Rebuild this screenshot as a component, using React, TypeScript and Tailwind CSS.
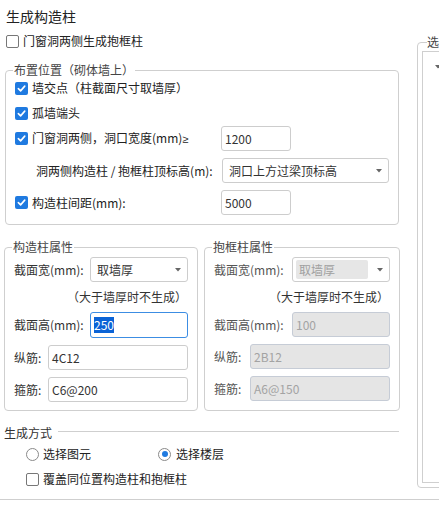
import React from "react";

const FONT = { fontFamily: '"Microsoft YaHei", "Noto Sans CJK SC", "Noto Sans", sans-serif' };

function Checkbox({ checked = false }: { checked?: boolean }) {
  if (checked) {
    return (
      <span className="w-[13px] h-[13px] shrink-0 rounded-[2px] bg-[#1f7ae0] flex items-center justify-center">
        <svg width="9" height="9" viewBox="0 0 10 10">
          <polyline
            points="1.5,5.2 4,7.6 8.6,2.4"
            fill="none"
            stroke="white"
            strokeWidth="1.8"
            strokeLinecap="round"
            strokeLinejoin="round"
          />
        </svg>
      </span>
    );
  }
  return (
    <span className="w-[13px] h-[13px] shrink-0 rounded-[2px] border border-[#777] bg-white" />
  );
}

function Radio({ checked = false }: { checked?: boolean }) {
  return (
    <span className="w-[13px] h-[13px] shrink-0 rounded-full border border-[#8a8a8a] bg-white flex items-center justify-center">
      {checked && <span className="w-[6px] h-[6px] rounded-full bg-[#1f7ae0]" />}
    </span>
  );
}

function Arrow() {
  return (
    <svg width="6" height="4" viewBox="0 0 6 4" className="shrink-0">
      <polygon points="0,0 6,0 3,3.5" fill="#666" />
    </svg>
  );
}

function Select({
  value,
  disabled,
  className,
}: {
  value: string;
  disabled?: boolean;
  className: string;
}) {
  return (
    <div
      className={`${className} h-[25px] shrink-0 rounded-[3px] border border-[#cdcdcd] bg-white flex items-center pr-[6px]`}
    >
      {disabled ? (
        <div className="ml-[3px] h-[19px] flex-1 bg-[#e6e6e6] rounded-[2px] text-[#a0a0a0] flex items-center pl-[3px] mr-[9px]">
          {value}
        </div>
      ) : (
        <div className="flex-1 pl-[6px] text-[#333]">{value}</div>
      )}
      <Arrow />
    </div>
  );
}

function TextInput({
  value,
  disabled,
  className,
}: {
  value: string;
  disabled?: boolean;
  className: string;
}) {
  return (
    <div
      className={`${className} h-[25px] shrink-0 rounded-[3px] border flex items-center pl-[3px] ${
        disabled
          ? "bg-[#e5e5e5] border-[#c6ccd6] text-[#a3a3a3]"
          : "bg-white border-[#cdcdcd] text-[#333]"
      }`}
    >
      {value}
    </div>
  );
}

function Group({
  legend,
  className,
  children,
}: {
  legend: string;
  className: string;
  children: React.ReactNode;
}) {
  return (
    <fieldset
      className={`${className} border border-[#cfcfcf] rounded-[4px] pl-[9px] pr-[9px]`}
    >
      <legend className="leading-[18px] text-[#444] px-[1px] -ml-[2px]">{legend}</legend>
      {children}
    </fieldset>
  );
}

function PropGroup({
  legend,
  disabled,
  width,
  height,
  rebar,
  stirrup,
}: {
  legend: string;
  disabled?: boolean;
  width: string;
  height: React.ReactNode;
  rebar: string;
  stirrup: string;
}) {
  const label = disabled ? "text-[#555]" : "text-[#333]";
  return (
    <Group legend={legend} className={disabled ? "w-[196px] pb-[8px]" : "w-[194px] pb-[8px]"}>
      <div className="mt-[1px] flex items-center justify-between">
        <span className={label}>截面宽(mm):</span>
        <Select value={width} disabled={disabled} className="w-[98px]" />
      </div>
      <div className="mt-[6px] h-[18px] leading-[18px] text-right pr-[1px] text-[#333]">
        （大于墙厚时不生成）
      </div>
      <div className="mt-[6px] flex items-center justify-between">
        <span className={label}>截面高(mm):</span>
        {height}
      </div>
      <div className="mt-[7px] flex items-center justify-between">
        <span className={label}>纵筋:</span>
        <TextInput value={rebar} disabled={disabled} className="w-[140px]" />
      </div>
      <div className="mt-[7px] flex items-center justify-between">
        <span className={label}>箍筋:</span>
        <TextInput value={stirrup} disabled={disabled} className="w-[140px]" />
      </div>
    </Group>
  );
}

export default function App() {
  return (
    <div
      className="w-[439px] h-[506px] overflow-hidden bg-white text-[12px] text-[#222] flex flex-col"
      style={FONT}
    >
      <div className="flex items-start h-[487px]">
        {/* Left column */}
        <div className="w-[396px] ml-[4px] shrink-0 flex flex-col pt-[6px]">
          <div className="h-[20px] leading-[20px] text-[14px] ml-[2px] text-[#222]">生成构造柱</div>
          <label className="mt-[5px] h-[20px] flex items-center gap-[4px] ml-[2px]">
            <Checkbox />
            <span>门窗洞两侧生成抱框柱</span>
          </label>

          <Group legend="布置位置（砌体墙上）" className="mt-[10px] ml-[1px] w-[394px] pb-[9px]">
            <div className="h-[18px] flex items-center gap-[4px]">
              <Checkbox checked />
              <span>墙交点（柱截面尺寸取墙厚）</span>
            </div>
            <div className="mt-[7px] h-[18px] flex items-center gap-[4px]">
              <Checkbox checked />
              <span>孤墙端头</span>
            </div>
            <div className="mt-[4px] h-[25px] flex items-center">
              <div className="w-[206px] flex items-center gap-[4px]">
                <Checkbox checked />
                <span>
                  门窗洞两侧，洞口宽度(mm)
                  <span className="font-['Liberation_Sans'] text-[11px]">≥</span>
                </span>
              </div>
              <TextInput value="1200" className="w-[70px]" />
            </div>
            <div className="mt-[7px] h-[25px] flex items-center">
              <div className="w-[207px] pl-[21px]">洞两侧构造柱 / 抱框柱顶标高(m):</div>
              <Select value="洞口上方过梁顶标高" className="w-[167px]" />
            </div>
            <div className="mt-[7px] h-[25px] flex items-center">
              <div className="w-[206px] flex items-center gap-[4px]">
                <Checkbox checked />
                <span>构造柱间距(mm):</span>
              </div>
              <TextInput value="5000" className="w-[70px]" />
            </div>
          </Group>

          <div className="mt-[13px] flex gap-[6px]">
            <PropGroup
              legend="构造柱属性"
              width="取墙厚"
              height={
                <div className="w-[98px] h-[26px] shrink-0 rounded-[3px] border border-[#3c8de3] bg-white flex items-center pl-[3px]">
                  <span className="bg-[#0a63d6] text-white leading-[16px]">250</span>
                </div>
              }
              rebar="4C12"
              stirrup="C6@200"
            />
            <PropGroup
              legend="抱框柱属性"
              disabled
              width="取墙厚"
              height={<TextInput value="100" disabled className="w-[98px]" />}
              rebar="2B12"
              stirrup="A6@150"
            />
          </div>

          <div className="mt-[13px] h-[18px] flex items-center">
            <span className="text-[#333]">生成方式</span>
            <div className="flex-1 ml-[6px] mr-[1px] -mt-[3px] border-t border-[#cfcfcf]" />
          </div>
          <div className="mt-[3px] h-[18px] flex items-center pl-[22px]">
            <div className="w-[132px] flex items-center gap-[4px]">
              <Radio />
              <span>选择图元</span>
            </div>
            <div className="flex items-center gap-[5px]">
              <Radio checked />
              <span>选择楼层</span>
            </div>
          </div>
          <div className="mt-[7px] h-[18px] flex items-center gap-[4px] pl-[22px]">
            <Checkbox />
            <span>覆盖同位置构造柱和抱框柱</span>
          </div>
        </div>

        {/* Right panel (clipped) */}
        <fieldset className="ml-[17px] mt-[33px] w-[200px] shrink-0 border border-[#cfcfcf] rounded-[4px] pl-[4px] pb-[4px]">
          <legend className="leading-[18px] ml-[5px] text-[#444]">选择楼层</legend>
          <div className="h-[432px] border border-[#cfcfcf] pl-[12px] pt-[13px]">
            <Arrow />
          </div>
        </fieldset>
      </div>
      <div className="mt-[12px] border-t border-[#cfcfcf]" />
    </div>
  );
}
